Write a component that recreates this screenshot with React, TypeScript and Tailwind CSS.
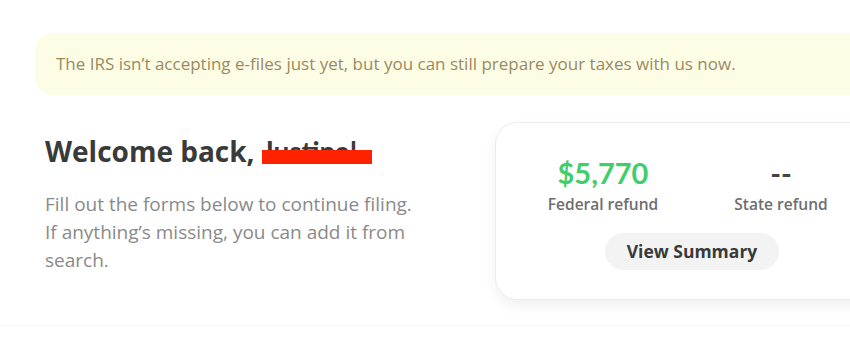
import React from "react";

const os = { fontFamily: "'Open Sans', Lato, sans-serif" };
const lato = { fontFamily: "Lato, 'Open Sans', sans-serif" };

export default function App() {
  return (
    <div className="relative h-[340px] w-[850px] overflow-hidden bg-white text-[#333]" style={os}>
      <div className="pt-[33px] pl-[35px]">
        <div className="-mr-[30px] flex h-[62px] items-center rounded-[18px] bg-[#fdfde6] pl-[21px]">
          <p className="text-[17px] text-[#9a8a5f]">
            The IRS isn’t accepting e-files just yet, but you can still prepare your taxes with us now.
          </p>
        </div>
      </div>

      <div className="mt-[27px] flex">
        <div className="w-[495px] shrink-0 pl-[45px] pt-[12px]">
          <h1 className="text-[28px] font-bold leading-[34px] text-[#3a3a3a]">
            Welcome back,{" "}
            <span className="relative inline-block">
              <span className="text-[#3a3a3a]" style={lato}>Justina!</span>
              <span className="absolute left-[0px] top-[16px] h-[14px] w-[110px] bg-[#ff2200]" />
            </span>
          </h1>
          <p className="mt-[22px] w-[382px] text-[19px] leading-[28px] text-[#8a8a8a]">
            Fill out the forms below to continue filing. If anything’s missing, you can add it from search.
          </p>
        </div>

        <div className="-mr-[40px] h-[178px] flex-1 rounded-[22px] border border-[#ececec] bg-white pl-[32px] pt-[34px] shadow-[0_6px_14px_rgba(0,0,0,0.06)]">
          <div className="flex w-[328px] flex-col items-center">
            <div className="flex w-full gap-[28px]">
              <div className="flex w-[150px] flex-col items-center">
                <span className="text-[29px] font-bold leading-[32px] text-[#3fce6a]" style={lato}>$5,770</span>
                <span className="mt-[5px] text-[15.5px] font-semibold leading-[20px] text-[#6e6e6e]">Federal refund</span>
              </div>
              <div className="flex w-[150px] flex-col items-center">
                <span className="text-[29px] font-bold leading-[32px] text-[#444]" style={lato}>--</span>
                <span className="mt-[5px] text-[15.5px] font-semibold leading-[20px] text-[#6e6e6e]">State refund</span>
              </div>
            </div>
            <button className="mt-[19px] flex h-[37px] w-[174px] items-center justify-center rounded-full bg-[#f3f3f3] text-[17.5px] font-bold text-[#3a3a3a]">
              View Summary
            </button>
          </div>
        </div>
      </div>

      <div className="absolute left-0 right-0 top-[325px] h-px bg-[#f7f7f7]" />
    </div>
  );
}
